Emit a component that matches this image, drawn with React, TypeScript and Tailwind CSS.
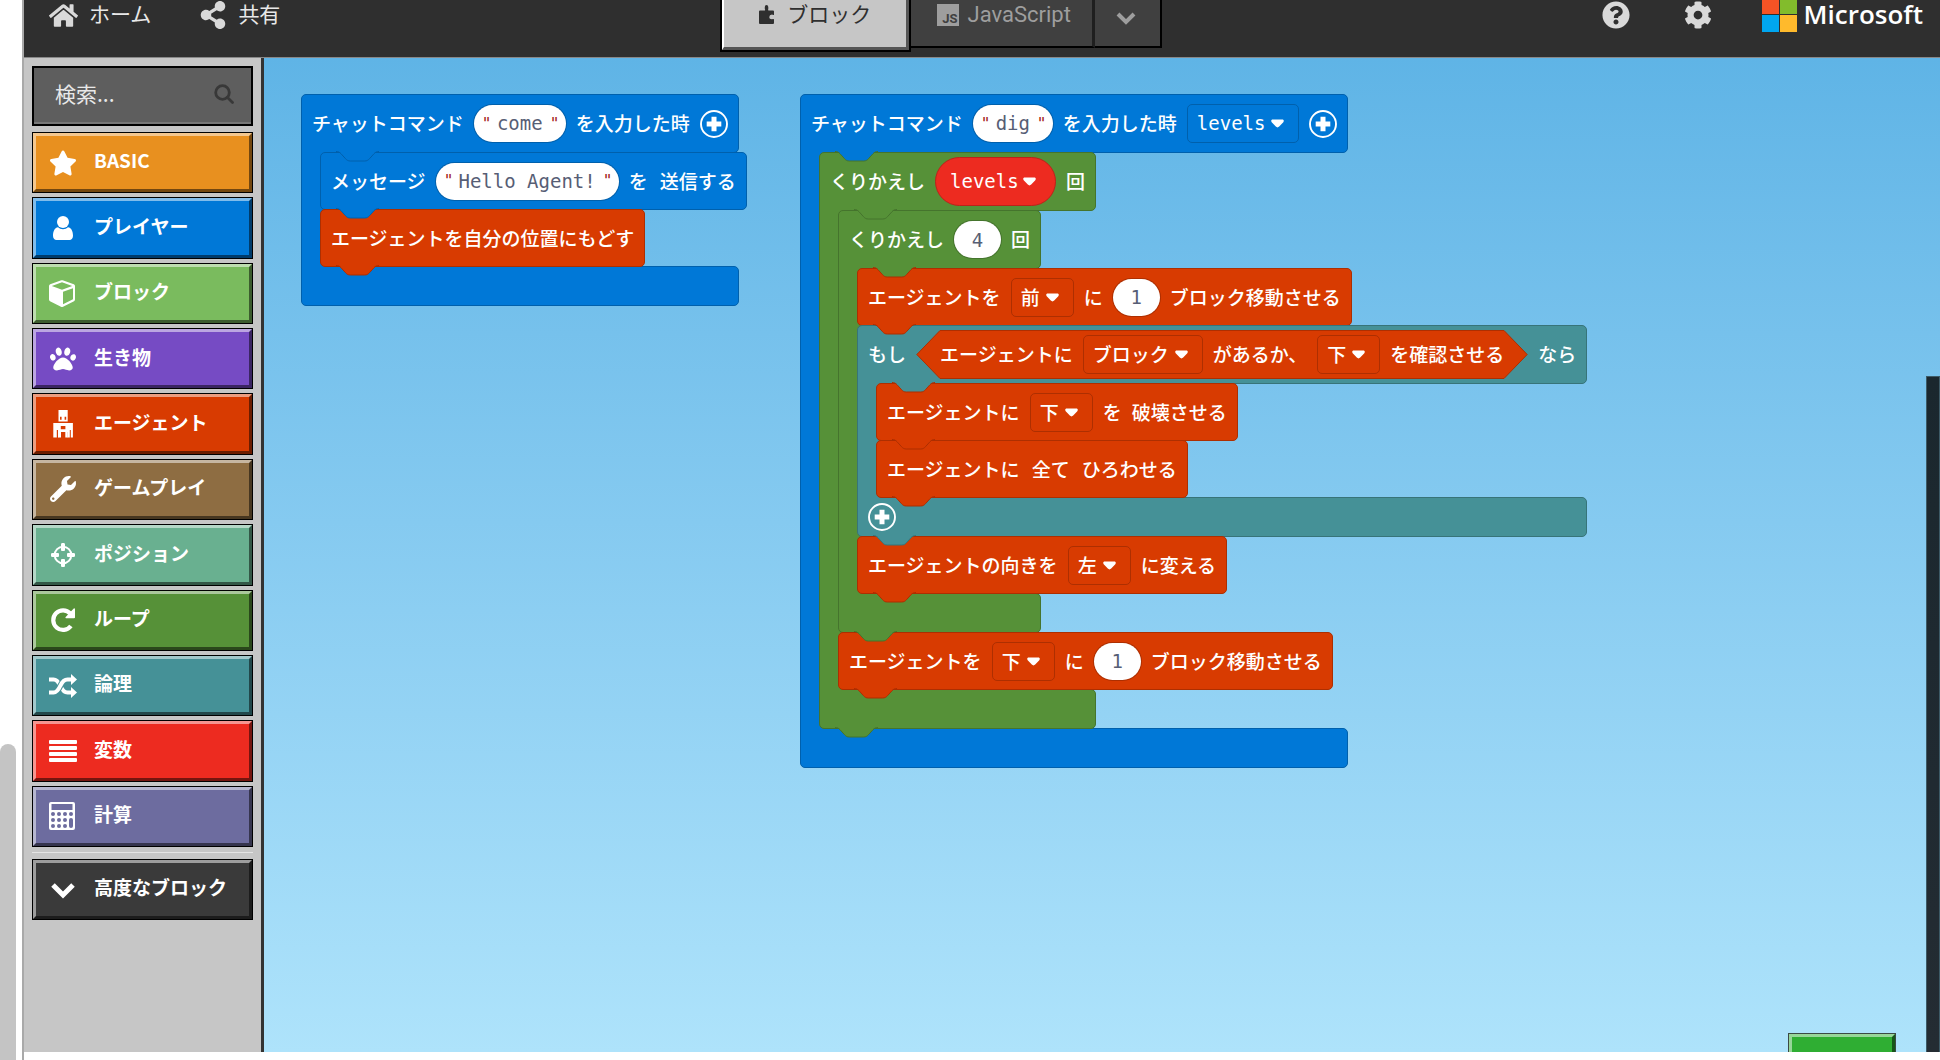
import React from "react";
import type { ReactNode } from "react";
import { FaStar, FaPaw, FaWrench, FaCog, FaQuestionCircle, FaHome, FaShareAlt } from "react-icons/fa";

type Tone = "player" | "loop" | "agent" | "logic";

const tones: Record<Tone, { box: string; fill: string; stroke: string }> = {
  player: { box: "bg-[#0078d7] border-[#0060ac]", fill: "#0078d7", stroke: "#0060ac" },
  loop: { box: "bg-[#569138] border-[#45742d]", fill: "#569138", stroke: "#45742d" },
  agent: { box: "bg-[#d83b01] border-[#ad2f01]", fill: "#d83b01", stroke: "#ad2f01" },
  logic: { box: "bg-[#459197] border-[#377479]", fill: "#459197", stroke: "#377479" },
};

/* ---------- workspace blocks ---------- */

function Tab({ tone, edge, inner }: { tone: Tone; edge?: Tone; inner?: boolean }) {
  return (
    <svg
      className={`absolute top-full z-10 -mt-px h-[11px] w-[43px] ${inner ? "left-[34px]" : "left-[15px]"}`}
      viewBox="0 0 43 11"
      aria-hidden="true"
    >
      <path
        d="M0 .5C2.5 .5 3.8 1.4 5 2.7L9.5 7.7C11 9.2 12 10 14.4 10H28.6C31 10 32 9.2 33.5 7.7L38 2.7C39.2 1.4 40.5 .5 43 .5V0H0Z"
        fill={tones[tone].fill}
      />
      <path
        d="M0 .5C2.5 .5 3.8 1.4 5 2.7L9.5 7.7C11 9.2 12 10 14.4 10H28.6C31 10 32 9.2 33.5 7.7L38 2.7C39.2 1.4 40.5 .5 43 .5"
        fill="none"
        stroke={tones[edge ?? tone].stroke}
      />
    </svg>
  );
}

function Statement({ tone, wide, children }: { tone: Tone; wide?: boolean; children: ReactNode }) {
  return (
    <div
      className={`relative -mb-px flex h-[58px] w-max items-center rounded-[5px] border px-[10px] ${
        wide ? "gap-3" : "gap-[10px]"
      } ${tones[tone].box}`}
    >
      {children}
      <Tab tone={tone} />
    </div>
  );
}

function Container({
  tone,
  first,
  head,
  foot,
  hat,
  children,
}: {
  tone: Tone;
  first: Tone;
  head: ReactNode;
  foot?: ReactNode;
  hat?: boolean;
  children: ReactNode;
}) {
  const box = tones[tone].box;
  return (
    <div className="w-max">
      <div className={`relative -mb-px flex h-[59px] items-center gap-[10px] rounded-[5px] border px-[10px] ${box}`}>
        {head}
        <Tab tone={tone} edge={first} inner />
      </div>
      <div className="flex w-0">
        <div className={`relative z-[1] -my-[6px] -mr-[5px] w-6 shrink-0 border-l ${box}`} />
        <div className="relative z-[2] w-max shrink-0">{children}</div>
      </div>
      <div className={`relative -mb-px flex h-10 items-center rounded-[5px] border px-[10px] ${box}`}>
        {foot}
        {!hat && <Tab tone={tone} />}
      </div>
    </div>
  );
}

function Quote() {
  return <span className="w-2 text-center text-base text-[#a31515]">"</span>;
}

function TextField({ label, value, width }: { label: string; value: string; width: string }) {
  return (
    <label className="flex h-[37px] items-center gap-1 rounded-full bg-white px-2 font-['DejaVu_Sans_Mono',monospace] ring-1 ring-[#0060ac]">
      <Quote />
      <input
        aria-label={label}
        defaultValue={value}
        className={`bg-transparent text-center text-[#575e75] outline-none ${width}`}
      />
      <Quote />
    </label>
  );
}

function NumberField({ label, value, ring }: { label: string; value: string; ring: string }) {
  return (
    <input
      aria-label={label}
      defaultValue={value}
      className={`h-[37px] w-[47px] rounded-full bg-white text-center font-['DejaVu_Sans_Mono',monospace] text-[#575e75] outline-none ring-1 ${ring}`}
    />
  );
}

function Caret({ place }: { place: string }) {
  return (
    <svg className={`pointer-events-none absolute h-[9px] w-[13px] ${place}`} viewBox="0 0 13 9" aria-hidden="true">
      <path d="M1.6 .5H11.4C12.8 .5 13.2 2 12.3 3.2L8.2 7.6C7.3 8.7 5.700 8.700 4.800 7.600L.7 3.200C-.2 2 .2 .5 1.600 .5Z" fill="#fff" />
    </svg>
  );
}

function Dropdown({ label, value, edge, mono }: { label: string; value: string; edge: string; mono?: boolean }) {
  return (
    <span className="relative flex items-center">
      <select
        aria-label={label}
        className={`h-[39px] appearance-none rounded-[5px] border bg-transparent pl-[9px] pr-8 font-medium text-white outline-none ${edge} ${
          mono ? "font-['DejaVu_Sans_Mono',monospace]" : ""
        }`}
      >
        <option>{value}</option>
      </select>
      <Caret place="right-[15px]" />
    </span>
  );
}

function VariablePill() {
  return (
    <span className="relative flex items-center">
      <select
        aria-label="変数"
        className="h-[49px] appearance-none rounded-full border border-[#bd221a] bg-[#ed2b20] pl-[14px] pr-9 font-['DejaVu_Sans_Mono',monospace] font-medium text-white outline-none"
      >
        <option>levels</option>
      </select>
      <Caret place="right-5" />
    </span>
  );
}

function AddButton({ label }: { label: string }) {
  return (
    <button type="button" aria-label={label} className="relative z-[3] size-7 shrink-0">
      <svg viewBox="0 0 28 28" className="size-7" aria-hidden="true">
        <circle cx="14" cy="14" r="13" fill="none" stroke="#fff" strokeWidth="1.9" />
        <path d="M11.5 6.7H16.5V11.5H21.3V16.5H16.5V21.3H11.5V16.5H6.7V11.5H11.5Z" fill="#fff" />
      </svg>
    </button>
  );
}

function Condition({ children }: { children: ReactNode }) {
  return (
    <div className="flex h-[49px]">
      <svg className="h-[49px] w-6 shrink-0" viewBox="0 0 24 49" aria-hidden="true">
        <path d="M24 .5L.8 24.5L24 48.5Z" fill="#d83b01" />
        <path d="M24 .5L.8 24.5L24 48.5" fill="none" stroke="#ad2f01" />
      </svg>
      <div className="flex items-center gap-[10px] border-y border-[#ad2f01] bg-[#d83b01]">{children}</div>
      <svg className="h-[49px] w-6 shrink-0" viewBox="0 0 24 49" aria-hidden="true">
        <path d="M0 .5L23.2 24.5L0 48.5Z" fill="#d83b01" />
        <path d="M0 .5L23.2 24.5L0 48.5" fill="none" stroke="#ad2f01" />
      </svg>
    </div>
  );
}

const agentEdge = "border-[#ad2f01]";
const agentRing = "ring-[#ad2f01]";

function ComeScript() {
  return (
    <Container
      tone="player"
      first="player"
      hat
      head={
        <>
          <span>チャットコマンド</span>
          <TextField label="チャットコマンド" value="come" width="w-[52px]" />
          <span>を入力した時</span>
          <AddButton label="引数を追加" />
        </>
      }
    >
      <Statement tone="player">
        <span>メッセージ</span>
        <TextField label="メッセージ" value="Hello Agent!" width="w-[143px]" />
        <span>を</span>
        <span className="pl-[2px]">送信する</span>
      </Statement>
      <Statement tone="agent">
        <span>エージェントを自分の位置にもどす</span>
      </Statement>
    </Container>
  );
}

function DigScript() {
  return (
    <Container
      tone="player"
      first="loop"
      hat
      head={
        <>
          <span>チャットコマンド</span>
          <TextField label="チャットコマンド" value="dig" width="w-10" />
          <span>を入力した時</span>
          <Dropdown label="引数" value="levels" edge="border-[#0060ac]" mono />
          <AddButton label="引数を追加" />
        </>
      }
    >
      <Container
        tone="loop"
        first="loop"
        head={
          <>
            <span>くりかえし</span>
            <VariablePill />
            <span>回</span>
          </>
        }
      >
        <Container
          tone="loop"
          first="agent"
          head={
            <>
              <span>くりかえし</span>
              <NumberField label="回数" value="4" ring="ring-[#45742d]" />
              <span>回</span>
            </>
          }
        >
          <Statement tone="agent">
            <span>エージェントを</span>
            <Dropdown label="方向" value="前" edge={agentEdge} />
            <span>に</span>
            <NumberField label="ブロック数" value="1" ring={agentRing} />
            <span>ブロック移動させる</span>
          </Statement>
          <Container
            tone="logic"
            first="agent"
            foot={<AddButton label="条件を追加" />}
            head={
              <>
                <span>もし</span>
                <Condition>
                  <span>エージェントに</span>
                  <Dropdown label="確認対象" value="ブロック" edge={agentEdge} />
                  <span>があるか、</span>
                  <Dropdown label="方向" value="下" edge={agentEdge} />
                  <span>を確認させる</span>
                </Condition>
                <span>なら</span>
              </>
            }
          >
            <Statement tone="agent">
              <span>エージェントに</span>
              <Dropdown label="方向" value="下" edge={agentEdge} />
              <span>を</span>
              <span>破壊させる</span>
            </Statement>
            <Statement tone="agent" wide>
              <span>エージェントに</span>
              <span>全て</span>
              <span>ひろわせる</span>
            </Statement>
          </Container>
          <Statement tone="agent">
            <span>エージェントの向きを</span>
            <Dropdown label="向き" value="左" edge={agentEdge} />
            <span>に変える</span>
          </Statement>
        </Container>
        <Statement tone="agent">
          <span>エージェントを</span>
          <Dropdown label="方向" value="下" edge={agentEdge} />
          <span>に</span>
          <NumberField label="ブロック数" value="1" ring={agentRing} />
          <span>ブロック移動させる</span>
        </Statement>
      </Container>
    </Container>
  );
}

/* ---------- toolbox ---------- */

function Glyph({ children }: { children: ReactNode }) {
  return (
    <svg viewBox="0 0 28 28" className="size-7" fill="currentColor" aria-hidden="true">
      {children}
    </svg>
  );
}

const UserGlyph = () => (
  <Glyph>
    <circle cx="14" cy="8" r="6" />
    <path d="M9 13.2C10.3 14.4 12 15.2 14 15.2S17.700 14.400 19 13.200C22.600 13.800 24 17.500 24 21.800C24 24.500 22.600 26 20.500 26H7.500C5.400 26 4 24.500 4 21.800C4 17.500 5.400 13.800 9 13.200Z" />
  </Glyph>
);

const CubeGlyph = () => (
  <Glyph>
    <path
      fillRule="evenodd"
      d="M12.300 1.300L1.200 5.300C.4 5.600 0 6.200 0 7V20.500C0 21.200 .4 21.800 1 22.200L12 27.700C12.600 28 13.400 28 14 27.700L25 22.200C25.600 21.800 26 21.200 26 20.500V7C26 6.200 25.600 5.600 24.800 5.300L13.700 1.300C13.200 1.100 12.800 1.100 12.300 1.300ZM13 3.300L23.200 7L13 10.700L2.800 7ZM24 9.200V20.300L14 25.300V12.800Z"
    />
  </Glyph>
);

const AgentGlyph = () => (
  <Glyph>
    <path fillRule="evenodd" d="M9.500 0H18.700V11.500H9.500ZM11 6.800V9.800H12.600V6.800ZM15.600 6.800V9.800H17.200V6.800Z" />
    <path
      fillRule="evenodd"
      d="M4.300 13H23.900V27.500H21.800V20H20.800V27.500H18.300V22H16.400V22H10V27.500H9V20H7.800V27.500H4.300ZM11.800 16V19.300H16.400V16Z"
    />
    <path d="M9.700 20H12V27.500H9.700ZM16.300 20H18.500V27.500H16.300Z" />
  </Glyph>
);

const TargetGlyph = () => (
  <Glyph>
    <circle cx="14" cy="14" r="8.300" fill="none" stroke="currentColor" strokeWidth="2" />
    <path d="M12 3.500Q12 2 13 2H15Q16 2 16 3.500V9Q16 10 15 10H13Q12 10 12 9ZM12 19Q12 18 13 18H15Q16 18 16 19V24.500Q16 26 15 26H13Q12 26 12 24.500ZM3.500 12H9Q10 12 10 13V15Q10 16 9 16H3.500Q2 16 2 15V13Q2 12 3.500 12ZM19 12H24.500Q26 12 26 13V15Q26 16 24.500 16H19Q18 16 18 15V13Q18 12 19 12Z" />
  </Glyph>
);

const RepeatGlyph = () => (
  <Glyph>
    <path d="M21.300 7.500A9.800 9.800 0 1 0 21.900 20" fill="none" stroke="currentColor" strokeWidth="4.200" />
    <path d="M26 3V11.500Q26 12.300 25 12.300H17Q15.800 12 16.700 11L24.500 2.700Q25.700 1.800 26 3Z" />
  </Glyph>
);

const ShuffleGlyph = () => (
  <Glyph>
    <path
      d="M0 7.500H4.500C8 7.500 9.500 10 11.300 13.800C13.300 18 15 20.500 18.500 20.500H23"
      fill="none"
      stroke="currentColor"
      strokeWidth="4"
    />
    <path
      d="M5 20.500C8 20.500 9.500 18 11.300 13.800C13.300 9.500 15 7.500 18.500 7.500"
      fill="none"
      stroke="#459197"
      strokeWidth="6"
    />
    <path
      d="M0 20.500H4.500C8 20.500 9.500 18 11.300 13.800C13.300 9.500 15 7.500 18.500 7.500H23"
      fill="none"
      stroke="currentColor"
      strokeWidth="4"
    />
    <path d="M22 2L28 7.500L22 13ZM22 15L28 20.500L22 26Z" />
  </Glyph>
);

const LinesGlyph = () => (
  <Glyph>
    {[3, 9, 15, 21].map((y) => (
      <rect key={y} y={y} width="28" height="4" rx="1" />
    ))}
  </Glyph>
);

const CalculatorGlyph = () => (
  <Glyph>
    <path fillRule="evenodd" d="M2 0H24Q26 0 26 2V26Q26 28 24 28H2Q0 28 0 26V2Q0 0 2 0ZM2.500 2V8H23.500V2Z" />
    <g fill="#6d6c9f">
      {[4, 10, 16, 22].map((x) => (
        <circle key={x} cx={x} cy="12" r="2" />
      ))}
      {[4, 10, 16].map((x) => (
        <circle key={x} cx={x} cy="18" r="2" />
      ))}
      {[4, 10, 16].map((x) => (
        <circle key={x} cx={x} cy="24" r="2" />
      ))}
      <rect x="20" y="16" width="4" height="10" rx="2" />
    </g>
  </Glyph>
);

const ChevronGlyph = () => (
  <Glyph>
    <path d="M4 9L14 19L24 9" fill="none" stroke="currentColor" strokeWidth="5" />
  </Glyph>
);

const categories: { name: string; color: string; icon: ReactNode }[] = [
  { name: "BASIC", color: "bg-[#e8901f]", icon: <FaStar className="size-7" /> },
  { name: "プレイヤー", color: "bg-[#0078d7]", icon: <UserGlyph /> },
  { name: "ブロック", color: "bg-[#7abb5e]", icon: <CubeGlyph /> },
  { name: "生き物", color: "bg-[#764bc4]", icon: <FaPaw className="size-[26px]" /> },
  { name: "エージェント", color: "bg-[#d83b01]", icon: <AgentGlyph /> },
  { name: "ゲームプレイ", color: "bg-[#8e6d42]", icon: <FaWrench className="size-[26px] -scale-x-100 rotate-90" /> },
  { name: "ポジション", color: "bg-[#69b090]", icon: <TargetGlyph /> },
  { name: "ループ", color: "bg-[#569138]", icon: <RepeatGlyph /> },
  { name: "論理", color: "bg-[#459197]", icon: <ShuffleGlyph /> },
  { name: "変数", color: "bg-[#ed2b20]", icon: <LinesGlyph /> },
  { name: "計算", color: "bg-[#6d6c9f]", icon: <CalculatorGlyph /> },
];

function CategoryButton({ name, color, icon }: { name: string; color: string; icon: ReactNode }) {
  return (
    <button type="button" className="flex w-full border border-black text-left">
      <span
        className={`flex h-full min-h-[59px] w-full items-center border-[3px] border-b-black/50 border-l-white/50 border-r-black/50 border-t-white/50 pl-[13px] ${color}`}
      >
        <span className="flex w-7 items-center justify-center">{icon}</span>
        <span className="pb-1 pl-[17px]">{name}</span>
      </span>
    </button>
  );
}

function Toolbox() {
  return (
    <aside className="w-60 shrink-0 border-r-[3px] border-[#333] bg-[#c6c6c6] px-2 pt-2 text-[19px] font-bold text-white">
      <label className="mb-[6px] flex h-[60px] items-center border-2 border-black bg-[#5e5e5e] pb-1 pl-[21px] pr-[17px] shadow-[inset_0_-2px_0_#777]">
        <input
          type="search"
          aria-label="検索"
          placeholder="検索..."
          className="w-full min-w-0 bg-transparent text-[21px] font-normal text-white outline-none placeholder:text-[#e8e8e8]"
        />
        <svg className="size-5 shrink-0" viewBox="0 0 20 20" fill="none" stroke="#383838" strokeWidth="2.800" aria-hidden="true">
          <circle cx="8.500" cy="8.500" r="6.800" />
          <path d="M13.500 13.500L18.500 18.500" strokeLinecap="round" />
        </svg>
      </label>
      <nav aria-label="カテゴリー">
        <div className="grid h-[715px] auto-rows-fr gap-1">
          {categories.map((c) => (
            <CategoryButton key={c.name} {...c} />
          ))}
        </div>
        <hr className="mb-[6px] mt-[5px] border-[#e4e4e4]" />
        <CategoryButton name="高度なブロック" color="bg-[#3a3a3a]" icon={<ChevronGlyph />} />
      </nav>
    </aside>
  );
}

/* ---------- header ---------- */

function Header() {
  return (
    <header className="flex h-[57px] items-start bg-[#2f2f2f] text-[21px] leading-[26px] text-[#d9d9d9]">
      <nav className="flex flex-[15_15_0%] gap-[48px] pl-[25px]">
        <a href="#home" className="flex h-[26px] items-center gap-[11px]">
          <FaHome className="mt-1 size-[29px] shrink-0" />
          <span className="text-[#e8e8e8]">ホーム</span>
        </a>
        <a href="#share" className="flex h-[26px] items-center gap-[11px]">
          <FaShareAlt className="mt-1 size-7 shrink-0" />
          <span className="text-[#e8e8e8]">共有</span>
        </a>
      </nav>
      <div className="flex items-start">
        <button type="button" className="flex h-[52px] w-[191px] border-2 border-t-0 border-black text-[#2f2f2f]">
          <span className="flex h-full w-full items-start justify-center gap-[13px] border-b-[3px] border-l-2 border-r-[3px] border-b-[#555] border-l-white border-r-[#555] bg-[#c6c6c6]">
            <svg className="mt-[5px] h-[19px] w-[15px]" viewBox="0 0 15 19" fill="currentColor" aria-hidden="true">
              <path d="M0 6.500Q0 5.500 1 5.500H5.800Q6.500 5.300 5.800 4V2Q5.800 0 7.500 0T9.300 2V4Q8.800 5.300 9.600 5.500H14Q15 5.500 15 6.500V9.800Q14 10.300 13 9.600Q10.300 9.800 10.300 12T13 14.300Q14 13.700 15 14.300V18Q15 19 14 19H1Q0 19 0 18Z" />
            </svg>
            <span>ブロック</span>
          </span>
        </button>
        <button
          type="button"
          className="flex h-12 w-[184px] items-start justify-center gap-[9px] border-b-2 border-r-[3px] border-b-black border-r-[#1f1f1f] bg-[#404040] pl-1 font-['Roboto',sans-serif] text-[22px] leading-[30px] text-[#9e9e9e]"
        >
          <span className="mt-1 flex size-[22px] items-end justify-end bg-[#9e9e9e] pr-[1px] text-[13px] font-bold leading-[14px] text-[#404040]">
            JS
          </span>
          <span>JavaScript</span>
        </button>
        <button
          type="button"
          aria-label="言語を選択"
          className="flex h-12 w-[67px] justify-center border-b-2 border-r-2 border-black bg-[#404040] pt-3"
        >
          <svg className="mr-1 h-[13px] w-5" viewBox="0 0 20 13" aria-hidden="true">
            <path d="M2 2L10 10L18 2" fill="none" stroke="#9e9e9e" strokeWidth="4" />
          </svg>
        </button>
      </div>
      <div className="flex flex-[17_17_0%] items-start justify-end pr-[17px]">
        <button type="button" aria-label="ヘルプ" className="mr-[54px] mt-px">
          <FaQuestionCircle className="size-7" />
        </button>
        <button type="button" aria-label="設定" className="mr-[50px] mt-px">
          <FaCog className="size-7" />
        </button>
        <a href="#microsoft" className="flex h-8 items-end gap-[7px]">
          <span className="grid size-[35px] shrink-0 grid-cols-2 gap-px">
            <span className="bg-[#f65325]" />
            <span className="bg-[#82bc2c]" />
            <span className="bg-[#00a6f0]" />
            <span className="bg-[#ffba2c]" />
          </span>
          <span className="font-['Open_Sans',sans-serif] text-[26px] font-semibold leading-9 text-white">Microsoft</span>
        </a>
      </div>
    </header>
  );
}

export default function App() {
  return (
    <div className="flex h-screen bg-white font-['Noto_Sans_CJK_JP',sans-serif]">
      <div className="flex w-[22px] shrink-0 flex-col justify-end">
        <div className="h-[316px] w-4 rounded-t-full bg-[#c4c4c4]" />
      </div>
      <div className="min-w-0 flex-1 border-l-2 border-[#a9a9a9] pb-2">
        <div className="flex h-full flex-col">
          <Header />
          <div className="flex min-h-0 flex-1 border-t border-[#888]">
            <Toolbox />
            <main className="relative min-w-0 flex-1 overflow-hidden bg-linear-to-b from-[#5fb4e6] to-[#aee3fb] text-[19px] font-medium text-white">
              <div className="absolute left-[37px] top-9">
                <ComeScript />
              </div>
              <div className="absolute left-[536px] top-9">
                <DigScript />
              </div>
              <div className="absolute bottom-0 right-0 top-[318px] w-[14px] border-x border-t border-[#3d5a66] bg-linear-to-b from-[#1a272e] to-[#242c33]" />
              <button
                type="button"
                aria-label="実行"
                className="absolute bottom-0 right-11 h-[19px] w-[108px] border border-b-0 border-[#3b4a44]"
              >
                <span className="block h-full border-[3px] border-b-0 border-l-white/50 border-r-black/50 border-t-white/50 bg-[#2fae33]" />
              </button>
            </main>
          </div>
        </div>
      </div>
    </div>
  );
}
